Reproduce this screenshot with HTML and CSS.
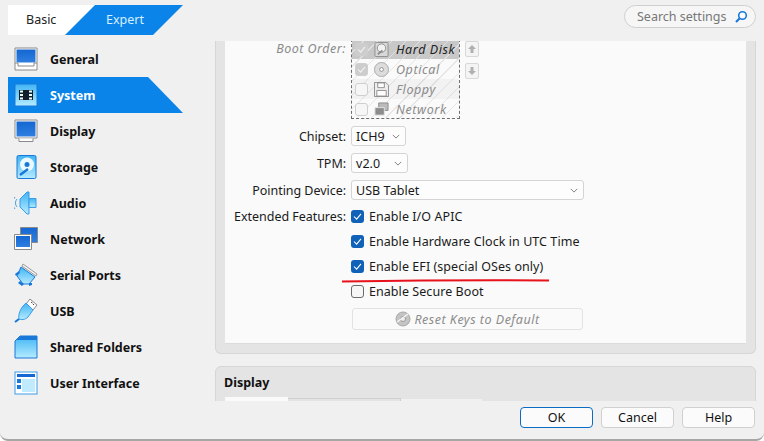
FILE: index.html
```html
<!DOCTYPE html>
<html lang="en">
<head>
    <meta charset="UTF-8">
    <title>System - Settings</title>
    <link rel="stylesheet" href="styles.css">
</head>
<body>
    <svg class="icon-defs" width="0" height="0">
        <defs>
            <linearGradient id="sky" x1="0" y1="0" x2="0" y2="1">
                <stop offset="0" stop-color="#3fb4f4"/>
                <stop offset="1" stop-color="#b5ebff"/>
            </linearGradient>
            <linearGradient id="screen" x1="0" y1="0" x2="0" y2="1">
                <stop offset="0" stop-color="#1467d2"/>
                <stop offset="1" stop-color="#2f7fe0"/>
            </linearGradient>
            <symbol id="i-general" viewBox="0 0 24 24">
                <path d="M1 1h22v22H1z" fill="#fff" stroke="#8a8a8a"/>
                <path d="M2.500 2.500h19v13h-19z" fill="url(#screen)"/>
                <path d="M1 16h3v3h16v-3h3" fill="none" stroke="#8a8a8a"/>
            </symbol>
            <symbol id="i-system" viewBox="0 0 24 24">
                <rect x="1" y="1" width="22" height="22" fill="url(#sky)" stroke="#1a78d8"/>
                <rect x="5" y="7" width="14" height="10" fill="#111d2b"/>
                <path d="M6 7.500h3v2H6zM6 11h3v2H6zM6 14.500h3v2H6zM15 7.500h3v2h-3zM15 11h3v2h-3zM15 14.500h3v2h-3z" fill="#eaffff"/>
            </symbol>
            <symbol id="i-display" viewBox="0 0 24 24">
                <path d="M1 1h22v18H1z" fill="#fff" stroke="#8a8a8a"/>
                <path d="M2.500 2.500h19v15h-19z" fill="url(#screen)"/>
                <path d="M5 19.500v3h14v-3" fill="#fff" stroke="#8a8a8a"/>
            </symbol>
            <symbol id="i-storage" viewBox="0 0 24 24">
                <rect x="3" y="0.500" width="19" height="23" rx="1.500" fill="url(#sky)" stroke="#1a78d8"/>
                <circle cx="13" cy="9.500" r="7" fill="#eaf8ff"/>
                <circle cx="13" cy="9.500" r="2.500" fill="#1a78d8"/>
                <path d="M6 20l8-6" stroke="#1a78d8" stroke-width="2.500"/>
            </symbol>
            <symbol id="i-audio" viewBox="0 0 24 24">
                <path d="M6 8l7-7h2v22h-2l-7-7z" fill="url(#sky)" stroke="#3b9be6"/>
                <path d="M15 7.500h7v9h-7z" fill="url(#sky)" stroke="#3b9be6"/>
                <path d="M3 8a6 6 0 0 0 0 8M1 6a9 9 0 0 0 0 12" fill="none" stroke="#4aa2e8"/>
            </symbol>
            <symbol id="i-network" viewBox="0 0 24 24">
                <path d="M6.500 0.500h17v15h-17z" fill="url(#screen)" stroke="#8a8a8a"/>
                <path d="M0.500 7.500h17v15h-17z" fill="#fff" stroke="#8a8a8a"/>
                <path d="M2 9h14v11H2z" fill="url(#screen)"/>
            </symbol>
            <symbol id="i-serial" viewBox="0 0 24 24">
                <path d="M9 1l14 10-1 2-14-10z" fill="#f4f4f4" stroke="#9a9a9a"/>
                <path d="M7 4l14 10-6 7H9L3 13z" fill="url(#sky)" stroke="#1a78d8"/>
                <path d="M1 11l4-3 1 2-4 3zM4 20l4 3 2-2-4-3zM15 23l3-1v-2h-3z" fill="#1a78d8"/>
            </symbol>
            <symbol id="i-usb" viewBox="0 0 24 24">
                <path d="M16 0l7 6-4 5-7-6z" fill="#fff" stroke="#8a8a8a"/>
                <path d="M17 3l1.500 1.200M19 5l1 1" stroke="#444"/>
                <path d="M12 4l7 7-5 7c-3 3-7 3-9 2C4 16 6 9 12 4z" fill="url(#sky)" stroke="#3b9be6"/>
                <path d="M5 20l-4 3" stroke="#1a78d8" stroke-width="2"/>
            </symbol>
            <symbol id="i-folder" viewBox="0 0 24 24">
                <path d="M1 6l5-5h17v22H1z" fill="url(#sky)" stroke="#1a78d8"/>
                <path d="M7 1h16v4H2z" fill="#1a78d8"/>
            </symbol>
            <symbol id="i-ui" viewBox="0 0 24 24">
                <rect x="1" y="1" width="22" height="22" fill="#fff" stroke="#3b9be6"/>
                <path d="M3 3h18v3H3z" fill="#1467d2"/>
                <path d="M8 8h13v13H8z" fill="#bfeaff"/>
                <path d="M3 8h4v4H3zM3 14h4v4H3z" fill="#1a78d8"/>
            </symbol>
            <symbol id="g-disk" viewBox="0 0 16 16">
                <rect x="1" y="0.500" width="14" height="15" rx="1" fill="#d8d8d8" stroke="#8c8c8c"/>
                <circle cx="8" cy="6.500" r="4.500" fill="#f2f2f2" stroke="#8c8c8c"/>
                <path d="M4 13l5-4" stroke="#8c8c8c" stroke-width="2"/>
            </symbol>
            <symbol id="g-optical" viewBox="0 0 16 16">
                <circle cx="8" cy="8" r="7.500" fill="#dcdcdc" stroke="#a8a8a8"/>
                <circle cx="8" cy="8" r="2" fill="#fff" stroke="#8c8c8c"/>
            </symbol>
            <symbol id="g-floppy" viewBox="0 0 16 16">
                <path d="M0.500 0.500h12l3 3v12H0.500z" fill="#eee" stroke="#8c8c8c"/>
                <path d="M4 1h7v5H4zM3 9h10v6H3z" fill="#fff" stroke="#8c8c8c"/>
            </symbol>
            <symbol id="g-network" viewBox="0 0 16 16">
                <path d="M5 1h10v8H5z" fill="#bbb" stroke="#8c8c8c"/>
                <path d="M1 6h10v8H1z" fill="#8c8c8c" stroke="#e4e4e4"/>
            </symbol>
        </defs>
    </svg>

    <div class="window">
        <div class="topbar">
            <div class="mode-tabs">
                <div class="mode-tab mode-basic">Basic</div>
                <div class="mode-tab mode-expert">Expert</div>
            </div>
            <div class="search">
                <span>Search settings</span>
                <svg width="14" height="14" viewBox="0 0 14 14">
                    <circle cx="8.500" cy="5.500" r="3.800" fill="#fff" stroke="#1a78d8" stroke-width="1.600"/>
                    <path d="M5.500 8.500L2 12" stroke="#1a78d8" stroke-width="2.200"/>
                </svg>
            </div>
        </div>

        <div class="body-row">
            <nav class="sidebar">
                <a class="nav-item"><svg class="nav-icon"><use href="#i-general"/></svg>General</a>
                <a class="nav-item active"><svg class="nav-icon"><use href="#i-system"/></svg>System</a>
                <a class="nav-item"><svg class="nav-icon"><use href="#i-display"/></svg>Display</a>
                <a class="nav-item"><svg class="nav-icon"><use href="#i-storage"/></svg>Storage</a>
                <a class="nav-item"><svg class="nav-icon"><use href="#i-audio"/></svg>Audio</a>
                <a class="nav-item"><svg class="nav-icon"><use href="#i-network"/></svg>Network</a>
                <a class="nav-item"><svg class="nav-icon"><use href="#i-serial"/></svg>Serial Ports</a>
                <a class="nav-item"><svg class="nav-icon"><use href="#i-usb"/></svg>USB</a>
                <a class="nav-item"><svg class="nav-icon"><use href="#i-folder"/></svg>Shared Folders</a>
                <a class="nav-item"><svg class="nav-icon"><use href="#i-ui"/></svg>User Interface</a>
            </nav>

            <main class="content">
                <section class="group">
                    <div class="panel">
                        <div class="form-row boot-row">
                            <div class="form-label disabled">Boot Order:</div>
                            <div class="boot-wrap">
                                <div class="boot-list">
                                    <div class="boot-item selected">
                                        <span class="box checked-gray"><svg viewBox="0 0 10 8"><path d="M1 4l3 3 5-6"/></svg></span>
                                        <svg class="boot-icon"><use href="#g-disk"/></svg>
                                        <span>Hard Disk</span>
                                    </div>
                                    <div class="boot-item">
                                        <span class="box checked-gray"><svg viewBox="0 0 10 8"><path d="M1 4l3 3 5-6"/></svg></span>
                                        <svg class="boot-icon"><use href="#g-optical"/></svg>
                                        <span>Optical</span>
                                    </div>
                                    <div class="boot-item shaded">
                                        <span class="box"></span>
                                        <svg class="boot-icon"><use href="#g-floppy"/></svg>
                                        <span>Floppy</span>
                                    </div>
                                    <div class="boot-item">
                                        <span class="box"></span>
                                        <svg class="boot-icon"><use href="#g-network"/></svg>
                                        <span>Network</span>
                                    </div>
                                </div>
                                <div class="boot-arrows">
                                    <span class="arrow-btn"><svg viewBox="0 0 8 8"><path d="M4 0l4 4H5.500v4h-3V4H0z"/></svg></span>
                                    <span class="arrow-btn"><svg viewBox="0 0 8 8"><path d="M4 8l4-4H5.500V0h-3v4H0z"/></svg></span>
                                </div>
                            </div>
                        </div>

                        <div class="form-row chipset-row">
                            <div class="form-label">Chipset:</div>
                            <div class="select select-chipset">ICH9<svg class="chevron" viewBox="0 0 10 6"><path d="M1 1l4 4 4-4"/></svg></div>
                        </div>
                        <div class="form-row tpm-row">
                            <div class="form-label">TPM:</div>
                            <div class="select select-tpm">v2.0<svg class="chevron" viewBox="0 0 10 6"><path d="M1 1l4 4 4-4"/></svg></div>
                        </div>
                        <div class="form-row pointing-row">
                            <div class="form-label">Pointing Device:</div>
                            <div class="select select-wide">USB Tablet<svg class="chevron" viewBox="0 0 10 6"><path d="M1 1l4 4 4-4"/></svg></div>
                        </div>

                        <div class="form-row features-row">
                            <div class="form-label">Extended Features:</div>
                            <div class="checks">
                                <label class="check"><span class="tick"><svg viewBox="0 0 10 8"><path d="M1 4l3 3 5-6"/></svg></span>Enable I/O APIC</label>
                                <label class="check"><span class="tick"><svg viewBox="0 0 10 8"><path d="M1 4l3 3 5-6"/></svg></span>Enable Hardware Clock in UTC Time</label>
                                <label class="check"><span class="tick"><svg viewBox="0 0 10 8"><path d="M1 4l3 3 5-6"/></svg></span>Enable EFI (special OSes only)</label>
                                <label class="check"><span class="untick"></span>Enable Secure Boot</label>
                                <div class="reset-btn">
                                    <svg width="16" height="16" viewBox="0 0 16 16">
                                        <circle cx="8" cy="8" r="7" fill="#c4c4c4" stroke="#a8a8a8"/>
                                        <circle cx="8" cy="8" r="2.500" fill="#eee" stroke="#999"/>
                                        <path d="M2 11L13 3" stroke="#f4f4f4" stroke-width="1.500"/>
                                    </svg>
                                    Reset Keys to Default
                                </div>
                            </div>
                        </div>
                    </div>
                </section>

                <section class="group group-display">
                    <h3>Display</h3>
                    <div class="sub-tabs">
                        <div class="sub-tab current"></div>
                        <div class="sub-tab other"></div>
                        <div class="sub-tab light"></div>
                    </div>
                </section>
            </main>
        </div>

        <div class="footer">
            <button class="btn primary">OK</button>
            <button class="btn">Cancel</button>
            <button class="btn">Help</button>
        </div>

        <!-- red marker somebody drew on the screenshot -->
        <svg class="marker" width="212" height="6" viewBox="0 0 212 6">
            <path d="M1 3.500C70 2.500 140 2 208 2.500" fill="none" stroke="#e8121c" stroke-width="2"/>
        </svg>
    </div>
</body>
</html>
```

FILE: styles.css
```css
* {
    box-sizing: border-box;
}
body {
    margin: 0;
    background-color: #fff;
    font-family: "Noto Sans", "Noto Sans CJK SC", sans-serif;
    font-size: 12.5px;
    color: #1a1a1a;
}
.icon-defs {
    position: absolute;
}
.window {
    position: relative;
    width: 764px;
    height: 441px;
    background-color: #f0f0f0;
    border-bottom: 2px solid #a6a6a6;
    border-radius: 0 0 8px 8px;
    display: flex;
    flex-direction: column;
    overflow: hidden;
}

/* top */
.topbar {
    height: 41px;
    padding: 5px 8px 0 8px;
    display: flex;
    justify-content: space-between;
    align-items: flex-start;
}
.mode-tabs {
    display: flex;
    width: 175px;
    height: 30px;
    position: relative;
}
.mode-tab {
    height: 30px;
    line-height: 29px;
    font-size: 12.5px;
}
.mode-basic {
    width: 95px;
    background-color: #fff;
    padding-left: 18px;
    color: #222;
}
.mode-expert {
    position: absolute;
    left: 57px;
    width: 118px;
    background-color: #0a84e8;
    color: #d8efff;
    padding-left: 41px;
    clip-path: polygon(30px 0, 100% 0, 88px 100%, 0 100%);
}
.search {
    width: 132px;
    height: 23px;
    margin-right: 0;
    background-color: #f6f6f6;
    border: 1px solid #cfcfcf;
    border-radius: 12px;
    padding: 0 7px 0 12px;
    display: flex;
    align-items: center;
    justify-content: space-between;
    color: #777;
    font-size: 12.5px;
}

/* main row */
.body-row {
    flex: 1;
    display: flex;
    min-height: 0;
}
.sidebar {
    width: 215px;
    padding: 0 0 0 8px;
}
.nav-item {
    width: 175px;
    height: 36px;
    display: flex;
    align-items: center;
    padding-left: 6px;
    font-weight: 700;
    font-size: 12.5px;
    color: #111;
}
.nav-icon {
    width: 24px;
    height: 24px;
    margin-right: 12px;
    flex: none;
}
.nav-item.active {
    background-color: #0a84e8;
    color: #fff;
    clip-path: polygon(0 0, 140px 0, 100% 100%, 0 100%);
}

.content {
    width: 541px;
    height: 360px;
    overflow: hidden;
}
.group {
    background-color: #e4e4e4;
    border: 1px solid #d6d6d6;
    border-top: 0;
    border-radius: 0 0 6px 6px;
    padding: 0 9px 10px 9px;
    height: 313px;
}
.panel {
    height: 303px;
    background-color: #fafafa;
    border-bottom: 1px solid #dcdcdc;
    overflow: hidden;
}

/* form */
.form-row {
    display: flex;
    align-items: flex-start;
}
.form-label {
    width: 121px;
    margin-right: 5px;
    text-align: right;
    white-space: nowrap;
    letter-spacing: -0.04px;
    flex: none;
}
.form-label.disabled {
    color: #8a8a8a;
    font-style: italic;
    letter-spacing: 0.5px;
    padding-top: 1px;
}
.boot-wrap {
    display: flex;
}
.boot-row {
    height: 87px;
    margin-top: -2px;
}
.boot-list {
    width: 109px;
    height: 80px;
    border: 1px dashed #6e6e6e;
    border-top: 0;
    background-image: repeating-linear-gradient(135deg, transparent 0 9px, #e6e6e6 9px 10px);
}
.boot-item {
    height: 20px;
    display: flex;
    align-items: center;
    padding-left: 3px;
    font-style: italic;
    letter-spacing: 0.6px;
    color: #8c8c8c;
}
.boot-item.selected {
    background-color: #c8c8c8;
    background-image: repeating-linear-gradient(135deg, transparent 0 9px, #e0e0e0 9px 10px);
    color: #222;
}
.boot-item.shaded {
    background-color: rgba(0, 0, 0, 0.03);
}
.box {
    width: 13px;
    height: 13px;
    border: 1px solid #cfcfcf;
    border-radius: 3px;
    margin-right: 6px;
    background-color: #f6f6f6;
    flex: none;
    display: flex;
    align-items: center;
    justify-content: center;
}
.box.checked-gray {
    background-color: #cdcdcd;
}
.box svg {
    width: 9px;
    height: 7px;
    fill: none;
    stroke: #f2f2f2;
    stroke-width: 1.200;
}
.boot-icon {
    width: 15px;
    height: 15px;
    margin-right: 7px;
    flex: none;
}
.boot-arrows {
    margin-left: 5px;
    padding-top: 2px;
    display: flex;
    flex-direction: column;
    gap: 6px;
}
.arrow-btn {
    width: 14px;
    height: 16px;
    border: 1px solid #d8d8d8;
    border-radius: 2px;
    background-color: #f4f4f4;
    display: flex;
    align-items: center;
    justify-content: center;
}
.arrow-btn svg {
    width: 8px;
    height: 8px;
    fill: #b0b0b0;
}
.chipset-row {
    align-items: center;
    height: 20px;
}
.tpm-row {
    align-items: center;
    height: 20px;
    margin-top: 7px;
}
.pointing-row {
    align-items: center;
    height: 20px;
    margin-top: 7px;
}
.select {
    height: 20px;
    background-color: #fdfdfd;
    border: 1px solid #d4d4d4;
    border-radius: 3px;
    padding: 0 5px 0 4px;
    display: flex;
    align-items: center;
    justify-content: space-between;
    letter-spacing: 0.06px;
    color: #1a1a1a;
}
.select-chipset {
    width: 55px;
}
.select-tpm {
    width: 57px;
}
.select-wide {
    width: 233px;
}
.chevron {
    width: 8px;
    height: 5px;
    fill: none;
    stroke: #666;
    stroke-width: 1;
}
.features-row {
    margin-top: 7px;
}
.features-row .form-label {
    line-height: 20px;
}
.checks {
    display: flex;
    flex-direction: column;
}
.check {
    height: 25px;
    display: flex;
    align-items: flex-start;
    line-height: 20px;
    letter-spacing: 0.06px;
    white-space: nowrap;
}
.tick,
.untick {
    width: 13px;
    height: 13px;
    margin-top: 3px;
    margin-right: 5px;
    border-radius: 3px;
    flex: none;
    display: flex;
    align-items: center;
    justify-content: center;
}
.tick {
    background-color: #0f62b8;
}
.tick svg {
    width: 9px;
    height: 7px;
    fill: none;
    stroke: #fff;
    stroke-width: 1.200;
}
.untick {
    border: 1px solid #6a6a6a;
    background-color: #f6f6f6;
}
.reset-btn {
    width: 231px;
    height: 22px;
    margin: 1px 0 0 1px;
    border: 1px solid #e2e2e2;
    border-radius: 3px;
    background-color: #fafafa;
    display: flex;
    align-items: center;
    justify-content: center;
    gap: 3px;
    color: #8c8c8c;
    font-style: italic;
    letter-spacing: 0.5px;
}

.group-display {
    height: 60px;
    margin-top: 12px;
    border-top: 1px solid #d6d6d6;
    border-radius: 6px 6px 0 0;
    padding: 0;
    position: relative;
}
.group-display h3 {
    margin: 0;
    padding: 7px 0 0 8px;
    height: 30px;
    font-size: 12.5px;
    font-weight: 700;
    color: #111;
}
.sub-tabs {
    display: flex;
    margin-left: 9px;
}
.sub-tab {
    height: 5px;
}
.sub-tab.current {
    width: 63px;
    background-color: #fafafa;
}
.sub-tab.other {
    width: 113px;
    margin-top: 1px;
    border: 1px solid #cfcfcf;
    border-left: 0;
}
.sub-tab.light {
    width: 81px;
    margin-top: 2px;
    background-color: #f0f0f0;
}

.footer {
    height: 39px;
    padding: 7px 9px 0 0;
    display: flex;
    justify-content: flex-end;
    gap: 8px;
}
.btn {
    width: 73px;
    height: 21px;
    padding: 0;
    background-color: #fbfbfb;
    border: 1px solid #d0d0d0;
    border-radius: 4px;
    font-family: inherit;
    font-size: 12.5px;
    color: #111;
}
.btn.primary {
    border-color: #0a6cc4;
}
.marker {
    position: absolute;
    left: 341px;
    top: 278px;
}
```
